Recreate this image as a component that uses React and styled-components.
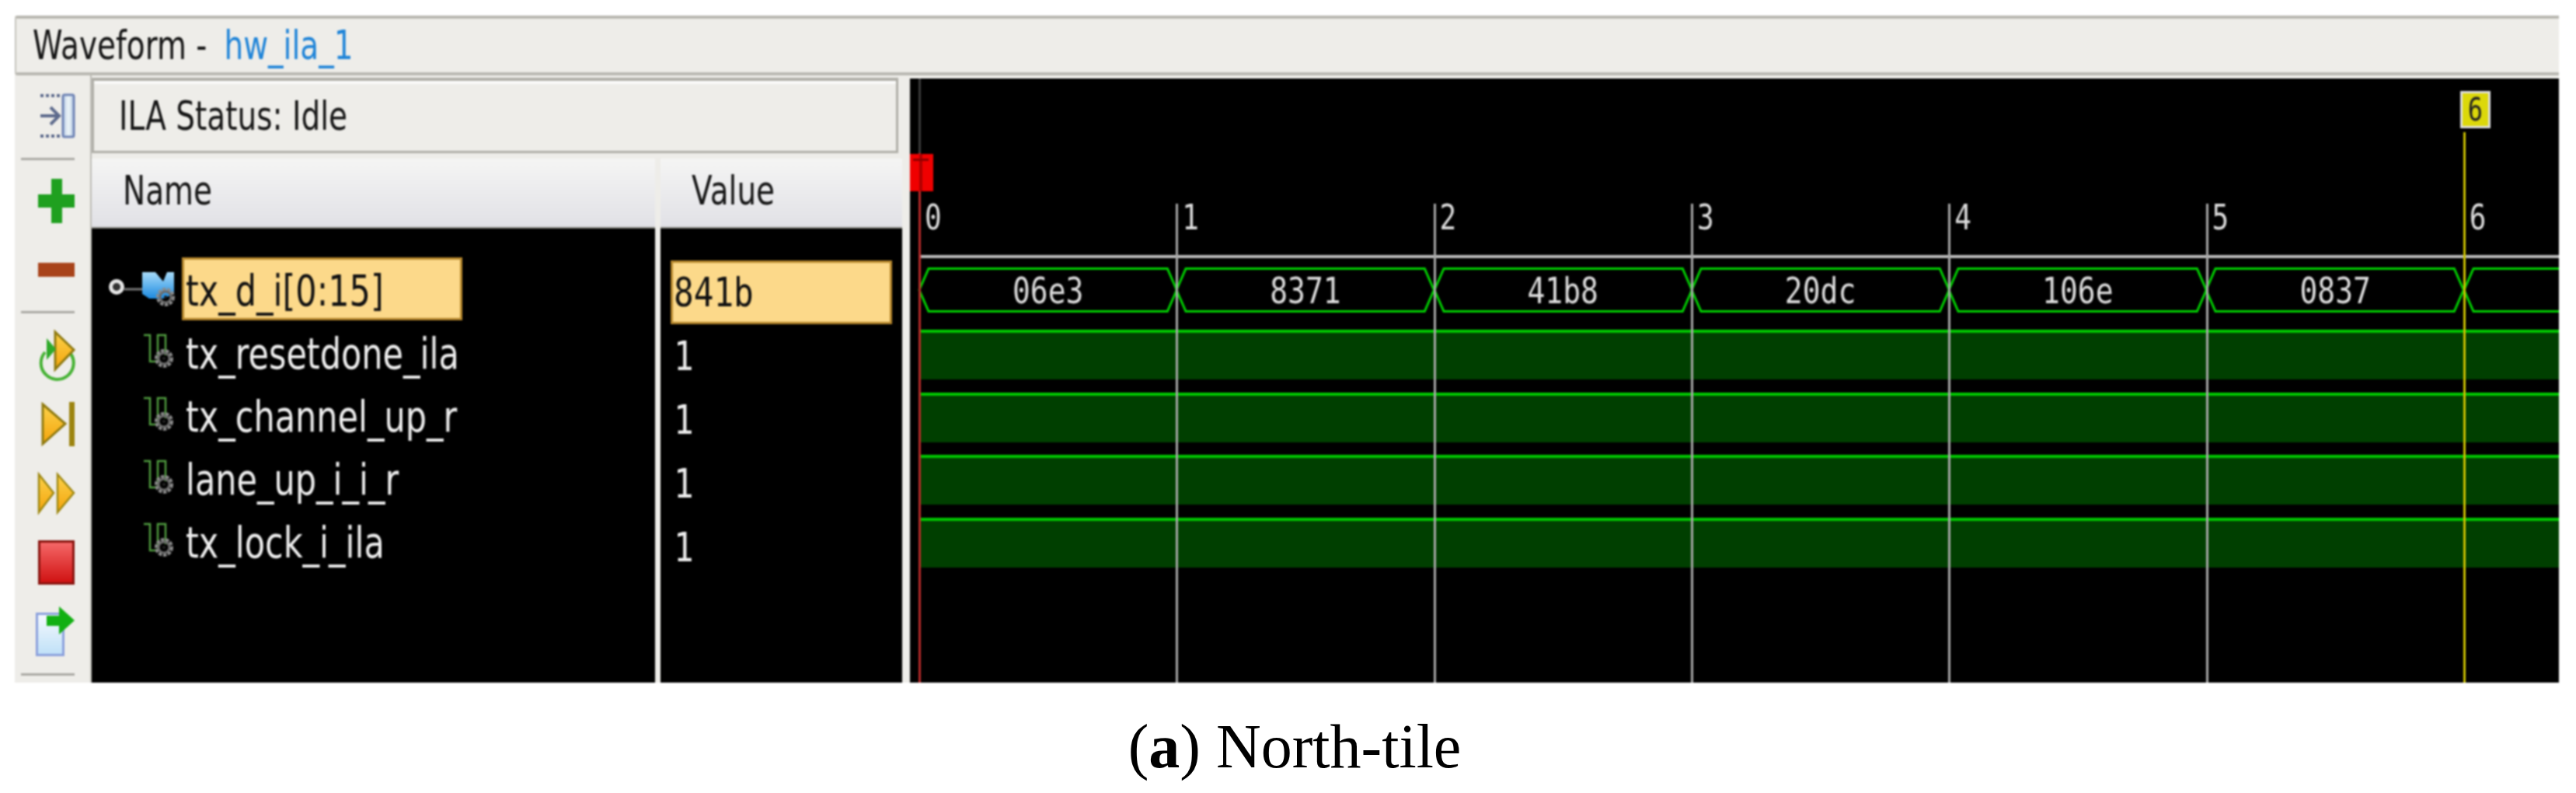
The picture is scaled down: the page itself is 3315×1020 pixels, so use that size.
import styled, { createGlobalStyle } from "styled-components";

const TICK = 331.3;
const busValues = ["06e3", "8371", "41b8", "20dc", "106e", "0837", "841b"];
const signals = ["tx_resetdone_ila", "tx_channel_up_r", "lane_up_i_i_r", "tx_lock_i_ila"];

const GlobalStyle = createGlobalStyle`
  html, body {
    margin: 0;
    background: #fff;
  }
`;

const Page = styled.div`
  width: 3315px;
  height: 1020px;
  padding: 20px 22px 0 19px;
  box-sizing: border-box;
  overflow: hidden;
`;

const Window = styled.div`
  display: flex;
  flex-direction: column;
  height: 858px;
  background: #eeede9;
  filter: blur(0.8px);
  font-family: "DejaVu Sans", sans-serif;
`;

const TitleBar = styled.div`
  flex: 0 0 77px;
  box-sizing: border-box;
  display: flex;
  align-items: center;
  padding-left: 21px;
  border-top: 4px solid #b9b8b1;
  border-bottom: 4px solid #bab9b2;
  border-left: 2px solid #c4c3bc;
  border-radius: 4px 0 0 4px;
  color: #151515;
`;

const Stretched = styled.span`
  display: inline-block;
  white-space: pre;
  font-size: ${(p) => p.$size || 39}px;
  line-height: 1;
  transform: scaleY(${(p) => p.$sy || 1.33});
  transform-origin: left center;
`;

const Mono = styled(Stretched)`
  font-family: "DejaVu Sans Mono", monospace;
`;

const TitleLink = styled.a`
  margin-left: 22px;
  color: #1f84d8;
  text-decoration: underline;
  text-underline-offset: 4px;
  text-decoration-thickness: 2px;
`;

const Body = styled.div`
  flex: 1;
  display: flex;
  min-height: 0;
`;

const Sidebar = styled.div`
  flex: 0 0 84px;
  box-sizing: border-box;
  display: flex;
  flex-direction: column;
  align-items: flex-end;
  padding-right: 20px;
  padding-top: 23px;
  border-right: 2px solid #bdbcb6;

  svg {
    display: block;
    flex: none;
    overflow: visible;
  }
`;

const ToolIcon = styled.div`
  margin-top: ${(p) => p.$mt}px;
  line-height: 0;
`;

const ToolSeparator = styled.div`
  flex: none;
  align-self: flex-start;
  margin-top: ${(p) => p.$mt}px;
  margin-left: 8px;
  width: 69px;
  height: 3px;
  background: #aaa9a4;
`;

const LeftPanel = styled.div`
  flex: 0 0 1043px;
  display: flex;
  flex-direction: column;
  padding-top: 3px;
  box-sizing: border-box;
`;

const StatusPanel = styled.div`
  flex: 0 0 97px;
  box-sizing: border-box;
  margin-right: 5px;
  display: flex;
  align-items: center;
  padding-left: 32px;
  border: 3px solid #b0afa8;
  border-top-width: 4px;
  box-shadow: inset 0 4px 0 #fbfbfa;
  color: #151515;
`;

const SignalTable = styled.div`
  flex: 1;
  margin-top: 7px;
  display: grid;
  grid-template-columns: 725px 311px;
  column-gap: 7px;
  grid-template-rows: 90px 1fr;
  min-height: 0;
`;

const ColumnHeader = styled.div`
  display: flex;
  align-items: center;
  padding-left: 40px;
  padding-bottom: 6px;
  box-sizing: border-box;
  background: linear-gradient(#f5f5f4, #e1e1e6);
  border-bottom: 2px solid #85857f;
  color: #151515;
`;

const NameColumn = styled.div`
  background: #000;
  padding-top: 37px;
  box-sizing: border-box;
`;

const ValueColumn = styled.div`
  background: #000;
  padding: 41px 0 0 13px;
  box-sizing: border-box;
`;

const NameRow = styled.div`
  display: flex;
  align-items: center;
  height: 81px;
`;

const IconCell = styled.div`
  flex: 0 0 116px;
  display: flex;
  justify-content: flex-end;
  padding-right: 10px;
  box-sizing: border-box;

  svg {
    display: block;
    overflow: visible;
  }
`;

const NameCell = styled.div`
  width: 361px;
  height: 81px;
  box-sizing: border-box;
  display: flex;
  align-items: center;
  padding-left: 2px;
  padding-top: 5px;
  color: ${(p) => (p.$selected ? "#111" : "#eee")};
  background: ${(p) => (p.$selected ? "#fcd98a" : "transparent")};
  border: 3px solid ${(p) => (p.$selected ? "#b5862b" : "transparent")};
`;

const ValueCell = styled.div`
  width: 285px;
  height: 82px;
  box-sizing: border-box;
  display: flex;
  align-items: center;
  padding-left: 1px;
  color: ${(p) => (p.$selected ? "#111" : "#eee")};
  background: ${(p) => (p.$selected ? "#fcd98a" : "transparent")};
  border: 3px solid ${(p) => (p.$selected ? "#b5862b" : "transparent")};
`;

const WavePane = styled.div`
  position: relative;
  flex: 1;
  margin: 4px 0 0 10px;
  padding-left: 12px;
  background: #000;
  overflow: hidden;
`;

const Ruler = styled.div`
  height: 231px;
  box-sizing: border-box;
  display: flex;
  align-items: flex-end;
  padding-bottom: 30px;
  border-bottom: 4px solid #bdbdbd;
  color: #ddd;
`;

const RulerCell = styled.div`
  flex: 0 0 ${TICK}px;
  padding-left: 7px;
  box-sizing: border-box;
`;

const BusRow = styled.div`
  display: flex;
  height: 60px;
  margin-top: 12px;
`;

const BusSegment = styled.div`
  position: relative;
  flex: 0 0 ${TICK}px;
  display: flex;
  align-items: center;
  justify-content: center;
  color: #ddd;

  svg {
    position: absolute;
    inset: 0;
    overflow: visible;
  }
`;

const DigitalRow = styled.div`
  height: 64px;
  margin-top: ${(p) => p.$mt}px;
  box-sizing: border-box;
  background: #003f00;
  border-top: 4px solid #00c800;
`;

const GridLine = styled.div`
  position: absolute;
  top: 161px;
  bottom: 0;
  left: ${(p) => p.$x}px;
  width: 3px;
  background: #a8a8a8;
`;

const CursorLine = styled.div`
  position: absolute;
  top: ${(p) => p.$top}px;
  bottom: 0;
  left: ${(p) => p.$x}px;
  width: 3px;
  background: ${(p) => p.$color};
`;

const RedFlag = styled.div`
  position: absolute;
  left: 0;
  top: 97px;
  width: 30px;
  height: 48px;
  background: #f00000;

  &::before {
    content: "";
    position: absolute;
    left: 12px;
    top: 0;
    width: 4px;
    height: 100%;
    background: #b00000;
  }

  &::after {
    content: "";
    position: absolute;
    left: 4px;
    top: 6px;
    width: 20px;
    height: 3px;
    background: #900000;
  }
`;

const YellowFlag = styled.div`
  position: absolute;
  left: 1995px;
  top: 16px;
  width: 39px;
  height: 48px;
  box-sizing: border-box;
  display: flex;
  align-items: center;
  justify-content: center;
  background: #dcd80a;
  border: 3px solid #dedede;
  color: #222;
`;

const Caption = styled.div`
  margin-top: 38px;
  padding-left: 20px;
  text-align: center;
  color: #000;
  font-family: "Liberation Serif", serif;
  font-size: 80px;
  line-height: 88px;

  b {
    font-weight: 700;
  }
`;

function ExpandIcon() {
  return (
    <svg width="44" height="58" viewBox="0 0 44 58">
      <defs>
        <linearGradient id="barFill" x1="0" y1="0" x2="1" y2="0">
          <stop offset="0" stopColor="#b8cbe4" />
          <stop offset="0.5" stopColor="#eef6f8" />
          <stop offset="1" stopColor="#b8cbe4" />
        </linearGradient>
      </defs>
      <path d="M0 3H25M0 55H25" stroke="#5d6a8c" strokeWidth="4" strokeDasharray="4 3" />
      <path d="M0 29H23M13 18L24 29L13 40" fill="none" stroke="#5d6a8c" strokeWidth="4" />
      <rect x="29" y="2" width="14" height="54" rx="2" fill="url(#barFill)" stroke="#6f84b5" strokeWidth="3" />
    </svg>
  );
}

function PlusIcon() {
  return (
    <svg width="47" height="57" viewBox="0 0 47 57">
      <path d="M17 0H31V20H47V37H31V57H17V37H0V20H17Z" fill="#1fa01f" />
    </svg>
  );
}

function MinusIcon() {
  return (
    <svg width="47" height="18" viewBox="0 0 47 18">
      <rect width="47" height="18" fill="#a8431a" />
    </svg>
  );
}

function AmberDefs({ id }) {
  return (
    <defs>
      <linearGradient id={id} x1="0" y1="0" x2="0" y2="1">
        <stop offset="0" stopColor="#fcd24a" />
        <stop offset="1" stopColor="#f4a40c" />
      </linearGradient>
    </defs>
  );
}

function RunIcon() {
  return (
    <svg width="47" height="65" viewBox="0 0 47 65">
      <AmberDefs id="runFill" />
      <path d="M9 28A21 21 0 1 0 42 30" fill="none" stroke="#45b233" strokeWidth="4" />
      <path d="M22 2L46 25L22 50Z" fill="url(#runFill)" stroke="#8f7a10" strokeWidth="3" />
      <path d="M11 10L23 24L11 38Z" fill="#2faa2a" />
    </svg>
  );
}

function StepIcon() {
  return (
    <svg width="43" height="57" viewBox="0 0 43 57">
      <AmberDefs id="stepFill" />
      <path d="M2 3L31 28L2 54Z" fill="url(#stepFill)" stroke="#8f7a10" strokeWidth="3" />
      <rect x="36" y="0" width="7" height="57" fill="#9c8410" />
    </svg>
  );
}

function ForwardIcon() {
  return (
    <svg width="47" height="55" viewBox="0 0 47 55">
      <AmberDefs id="ffFill" />
      <path d="M1 3L20 27L1 52Z" fill="url(#ffFill)" stroke="#a08a14" strokeWidth="2.5" />
      <path d="M25 3L46 27L25 52Z" fill="url(#ffFill)" stroke="#a08a14" strokeWidth="2.5" />
    </svg>
  );
}

function StopIcon() {
  return (
    <svg width="47" height="57" viewBox="0 0 47 57">
      <defs>
        <linearGradient id="stopFill" x1="0" y1="0" x2="0" y2="1">
          <stop offset="0" stopColor="#f66a6a" />
          <stop offset="1" stopColor="#cf1010" />
        </linearGradient>
      </defs>
      <rect x="1.5" y="1.5" width="44" height="54" fill="url(#stopFill)" stroke="#8a1510" strokeWidth="3" />
    </svg>
  );
}

function ExportIcon() {
  return (
    <svg width="50" height="65" viewBox="0 0 50 65">
      <defs>
        <linearGradient id="docFill" x1="0" y1="0" x2="0" y2="1">
          <stop offset="0" stopColor="#f6fafd" />
          <stop offset="1" stopColor="#bfe0f8" />
        </linearGradient>
      </defs>
      <rect x="1.5" y="9.5" width="34" height="53" fill="url(#docFill)" stroke="#8ba0dc" strokeWidth="3" />
      <path d="M14 12H30V0L50 18L30 36V25H14Z" fill="#12b012" />
    </svg>
  );
}

function Gear({ x, y }) {
  return (
    <g transform={`translate(${x} ${y})`}>
      <circle r="9" fill="none" stroke="#8c8c8c" strokeWidth="6" strokeDasharray="4 1.5" />
      <circle r="7" fill="none" stroke="#6a6a6a" strokeWidth="3" />
      <circle r="2" fill="#222" />
    </g>
  );
}

function BusIcon() {
  return (
    <svg width="84" height="48" viewBox="0 0 84 48">
      <defs>
        <linearGradient id="busFill" x1="0" y1="0" x2="0" y2="1">
          <stop offset="0" stopColor="#a8dcfa" />
          <stop offset="1" stopColor="#1c8ae0" />
        </linearGradient>
      </defs>
      <circle cx="10" cy="21" r="7.5" fill="#333" stroke="#e6e6e6" strokeWidth="5" />
      <path d="M20 24H43" stroke="#777" strokeWidth="3" />
      <path d="M43 2H60L70 14L75 2H84V30L70 36H52L43 30Z" fill="url(#busFill)" />
      <Gear x={73} y={34} />
    </svg>
  );
}

function SignalIcon() {
  return (
    <svg width="39" height="48" viewBox="0 0 39 48">
      <path d="M0 2H8V36H18V2H28V28" fill="none" stroke="#4f9c3f" strokeWidth="2.5" />
      <Gear x={26} y={32} />
    </svg>
  );
}

function BusShape() {
  const w = TICK;
  return (
    <svg width={w} height="60" viewBox={`0 0 ${w} 60`}>
      <polygon
        points={`0,29 12,1.5 ${w - 12},1.5 ${w},29 ${w - 12},56.5 12,56.5`}
        fill="none"
        stroke="#00d000"
        strokeWidth="3"
      />
    </svg>
  );
}

export default function App() {
  return (
    <Page>
      <GlobalStyle />
      <Window>
        <TitleBar>
          <Stretched>Waveform -</Stretched>
          <TitleLink>
            <Stretched>hw_ila_1</Stretched>
          </TitleLink>
        </TitleBar>
        <Body>
          <Sidebar>
            <ToolIcon $mt={0}><ExpandIcon /></ToolIcon>
            <ToolSeparator $mt={25} />
            <ToolIcon $mt={24}><PlusIcon /></ToolIcon>
            <ToolIcon $mt={51}><MinusIcon /></ToolIcon>
            <ToolSeparator $mt={44} />
            <ToolIcon $mt={22}><RunIcon /></ToolIcon>
            <ToolIcon $mt={27}><StepIcon /></ToolIcon>
            <ToolIcon $mt={33}><ForwardIcon /></ToolIcon>
            <ToolIcon $mt={33}><StopIcon /></ToolIcon>
            <ToolIcon $mt={28}><ExportIcon /></ToolIcon>
            <ToolSeparator $mt={21} />
          </Sidebar>
          <LeftPanel>
            <StatusPanel>
              <Stretched>ILA Status: Idle</Stretched>
            </StatusPanel>
            <SignalTable>
              <ColumnHeader><Stretched>Name</Stretched></ColumnHeader>
              <ColumnHeader><Stretched>Value</Stretched></ColumnHeader>
              <NameColumn>
                <NameRow>
                  <IconCell><BusIcon /></IconCell>
                  <NameCell $selected>
                    <Stretched $size={43} $sy={1.28}>tx_d_i[0:15]</Stretched>
                  </NameCell>
                </NameRow>
                {signals.map((name) => (
                  <NameRow key={name}>
                    <IconCell><SignalIcon /></IconCell>
                    <NameCell>
                      <Stretched $size={43} $sy={1.28}>{name}</Stretched>
                    </NameCell>
                  </NameRow>
                ))}
              </NameColumn>
              <ValueColumn>
                <ValueCell $selected>
                  <Mono $size={42.7} $sy={1.22}>841b</Mono>
                </ValueCell>
                {signals.map((name) => (
                  <ValueCell key={name}>
                    <Mono $size={42.7} $sy={1.22}>1</Mono>
                  </ValueCell>
                ))}
              </ValueColumn>
            </SignalTable>
          </LeftPanel>
          <WavePane>
            <Ruler>
              {[0, 1, 2, 3, 4, 5, 6].map((n) => (
                <RulerCell key={n}>
                  <Mono $size={36} $sy={1.25}>{n}</Mono>
                </RulerCell>
              ))}
            </Ruler>
            <BusRow>
              {busValues.map((value) => (
                <BusSegment key={value}>
                  <BusShape />
                  <Mono $size={38} $sy={1.2}>{value}</Mono>
                </BusSegment>
              ))}
            </BusRow>
            <DigitalRow $mt={20} />
            <DigitalRow $mt={16.5} />
            <DigitalRow $mt={16.5} />
            <DigitalRow $mt={16.5} />
            {[1, 2, 3, 4, 5].map((n) => (
              <GridLine key={n} $x={11 + n * TICK} />
            ))}
            <CursorLine $x={11} $top={0} $color="linear-gradient(#3a3a3a 96px, #b62a2a 96px)" />
            <RedFlag />
            <CursorLine $x={11 + 6 * TICK} $top={69} $color="#c8be00" />
            <YellowFlag>
              <Mono $size={32} $sy={1.3}>6</Mono>
            </YellowFlag>
          </WavePane>
        </Body>
      </Window>
      <Caption>
        (<b>a</b>) North-tile
      </Caption>
    </Page>
  );
}
